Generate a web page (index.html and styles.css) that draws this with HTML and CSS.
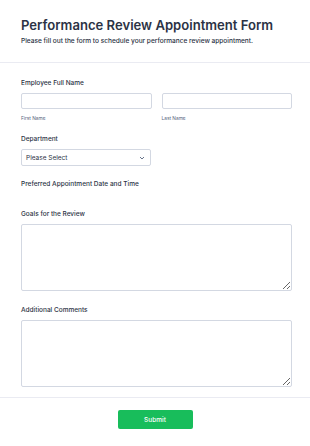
FILE: index.html
```html
<!DOCTYPE html>
<html>
  <head>
    <meta charset="utf-8">
    <title>Performance Review Appointment Form</title>
    <link rel="stylesheet" href="styles.css">
  </head>
  <body>
    <form class="form">
      <div class="header">
        <h1>Performance Review Appointment Form</h1>
        <p>Please fill out the form to schedule your performance review appointment.</p>
      </div>
      <div class="fields">
        <div class="field">
          <label class="label">Employee Full Name</label>
          <div class="name-row">
            <div class="name-col">
              <input type="text">
              <span class="sublabel">First Name</span>
            </div>
            <div class="name-col">
              <input type="text">
              <span class="sublabel">Last Name</span>
            </div>
          </div>
        </div>
        <div class="field">
          <label class="label">Department</label>
          <div class="select">
            <span>Please Select</span>
            <svg width="6" height="4" viewBox="0 0 6 4"><path d="M1 1 L3 3 L5 1" fill="none" stroke="#57647e" stroke-width="0.9"/></svg>
          </div>
        </div>
        <div class="field date">
          <label class="label">Preferred Appointment Date and Time</label>
        </div>
        <div class="field long">
          <label class="label">Goals for the Review</label>
          <textarea></textarea>
        </div>
        <div class="field long last">
          <label class="label">Additional Comments</label>
          <textarea></textarea>
        </div>
      </div>
      <div class="footer">
        <button type="button">Submit</button>
      </div>
    </form>
  </body>
</html>
```

FILE: styles.css
```css
*, *::before, *::after {
  padding: 0;
  margin: 0;
  border: 0;
  box-sizing: border-box;
}

body {background: #fff; font-family: Inter, "Liberation Sans", sans-serif; color: #2c3345;}

.header {padding: 17px 21px 16px; border-bottom: 1px solid #eaebf2;}
.header h1 {font-size: 13.1px; font-weight: 600; line-height: 16px;}
.header p {font-size: 6.55px; font-weight: 500; line-height: 10px; margin-top: 3px;}

.fields {padding: 16px 18px 0 21px;}
.field {margin-bottom: 14px;}
.field.date {margin-bottom: 21px;}
.field.long {margin-bottom: 15px;}
.field.last {margin-bottom: 10px;}
.label {display: block; font-size: 6.5px; font-weight: 500; line-height: 9px; margin-bottom: 5px;}

.name-row {display: flex; gap: 10px;}
.name-col {flex: 1;}
input, textarea {display: block; width: 100%; border: 1px solid #d3d8e2; border-radius: 2px; background: #fff;}
input {height: 16px;}
.sublabel {display: block; font-size: 4.8px; color: #57647e; margin-top: 6px; line-height: 6px;}

.select {width: 130px; height: 17px; border: 1px solid #d3d8e2; border-radius: 2px; display: flex; align-items: center; justify-content: space-between; padding: 0 5px 0 4px; font-size: 6.5px;}

textarea {height: 67px; resize: vertical;}

.footer {border-top: 1px solid #eaebf2; padding: 12px 0; display: flex; justify-content: center;}
.footer button {width: 75px; height: 19px; background: #18bd5b; color: #fff; border-radius: 2px; font-family: inherit; font-size: 6.5px; font-weight: 500;}
```
